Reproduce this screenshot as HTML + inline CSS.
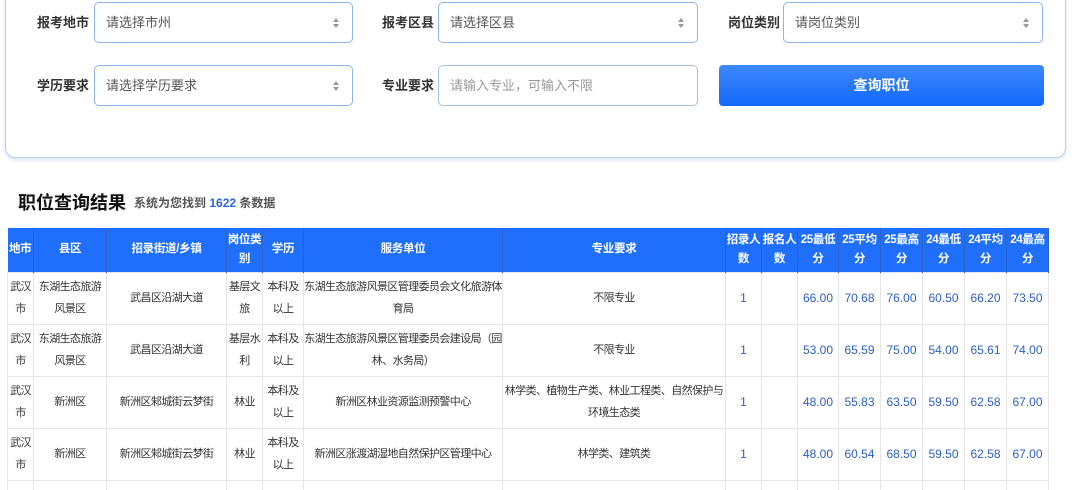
<!DOCTYPE html>
<html><head><meta charset="utf-8"><style>
*{box-sizing:border-box;margin:0;padding:0}
html,body{width:1080px;height:490px;overflow:hidden}
body{background:#fff;font-family:"Liberation Sans","Noto Sans CJK SC",sans-serif;color:#333;position:relative}
.card{position:absolute;left:5px;top:-20px;width:1061px;height:178px;border:1px solid #b7cff0;border-radius:10px;box-shadow:0 2px 4px rgba(80,130,200,.2)}
.lab{position:absolute;font-size:13px;font-weight:bold;color:#333;line-height:16px}
.inp{position:absolute;height:41px;border:1px solid #8fb4ea;border-radius:5px;font-size:13px;color:#555;padding-left:11px;line-height:39px}
.inp.ph{color:#999;border-color:#a9c2e6}
.arr{position:absolute;right:12px;top:14px;width:8px;height:12px}
.btn{position:absolute;left:719px;top:65px;width:325px;height:41px;border-radius:4px;background:linear-gradient(#3f88fb,#1168fb);color:#fff;font-weight:bold;font-size:14px;text-align:center;line-height:41px}
.title{position:absolute;left:18px;top:189px;font-size:18px;font-weight:bold;color:#111}
.sub{position:absolute;left:134px;top:194px;font-size:12px;color:#555;font-weight:bold}
.sub b{color:#2a66d9}
.wrap{position:absolute;left:0;top:0;width:1080px;height:490px;overflow:hidden}
table{position:absolute;left:7px;top:228px;border-collapse:collapse;table-layout:fixed;width:1041px}
th{background:#1f6ffc;color:#fff;font-size:11.5px;font-weight:bold;height:44px;line-height:19px;border-right:1px solid #2a63c8;padding:0;overflow:hidden;letter-spacing:-0.3px}
td{font-size:11px;letter-spacing:-0.6px;color:#333;height:52px;line-height:22px;text-align:center;border:1px solid #e3e6ea;padding:0;vertical-align:middle}
td.n{color:#2e5fc4;font-size:12px;letter-spacing:0}
</style></head><body>
<div class="card"></div>
<div class="lab" style="left:37px;top:15px">报考地市</div>
<div class="inp" style="left:94px;top:2px;width:259px">请选择市州<svg class="arr" viewBox="0 0 8 12"><path d="M1 5L4 1L7 5Z M1 7L4 11L7 7Z" fill="#999"/></svg></div>
<div class="lab" style="left:382px;top:15px">报考区县</div>
<div class="inp" style="left:438px;top:2px;width:260px">请选择区县<svg class="arr" viewBox="0 0 8 12"><path d="M1 5L4 1L7 5Z M1 7L4 11L7 7Z" fill="#999"/></svg></div>
<div class="lab" style="left:728px;top:15px">岗位类别</div>
<div class="inp" style="left:783px;top:2px;width:260px">请岗位类别<svg class="arr" viewBox="0 0 8 12"><path d="M1 5L4 1L7 5Z M1 7L4 11L7 7Z" fill="#999"/></svg></div>
<div class="lab" style="left:37px;top:78px">学历要求</div>
<div class="inp" style="left:94px;top:65px;width:259px">请选择学历要求<svg class="arr" viewBox="0 0 8 12"><path d="M1 5L4 1L7 5Z M1 7L4 11L7 7Z" fill="#999"/></svg></div>
<div class="lab" style="left:382px;top:78px">专业要求</div>
<div class="inp ph" style="left:438px;top:65px;width:260px">请输入专业，可输入不限</div>
<div class="btn">查询职位</div>
<div class="title">职位查询结果</div>
<div class="sub">系统为您找到 <b>1622</b> 条数据</div>
<div class="wrap">
<table>
<colgroup><col style="width:26px"><col style="width:73px"><col style="width:120px"><col style="width:36px"><col style="width:41px"><col style="width:199px"><col style="width:223px"><col style="width:36px"><col style="width:36px"><col style="width:41px"><col style="width:42px"><col style="width:42px"><col style="width:42px"><col style="width:42px"><col style="width:42px"></colgroup>
<tr><th>地市</th><th>县区</th><th>招录街道/乡镇</th><th>岗位类别</th><th>学历</th><th>服务单位</th><th>专业要求</th><th>招录人数</th><th>报名人数</th><th>25最低分</th><th>25平均分</th><th>25最高分</th><th>24最低分</th><th>24平均分</th><th>24最高分</th></tr>
<tr><td>武汉市</td><td>东湖生态旅游风景区</td><td>武昌区沿湖大道</td><td>基层文旅</td><td>本科及以上</td><td>东湖生态旅游风景区管理委员会文化旅游体育局</td><td>不限专业</td><td class="n">1</td><td></td><td class="n">66.00</td><td class="n">70.68</td><td class="n">76.00</td><td class="n">60.50</td><td class="n">66.20</td><td class="n">73.50</td></tr>
<tr><td>武汉市</td><td>东湖生态旅游风景区</td><td>武昌区沿湖大道</td><td>基层水利</td><td>本科及以上</td><td>东湖生态旅游风景区管理委员会建设局（园林、水务局）</td><td>不限专业</td><td class="n">1</td><td></td><td class="n">53.00</td><td class="n">65.59</td><td class="n">75.00</td><td class="n">54.00</td><td class="n">65.61</td><td class="n">74.00</td></tr>
<tr><td>武汉市</td><td>新洲区</td><td>新洲区邾城街云梦街</td><td>林业</td><td>本科及以上</td><td>新洲区林业资源监测预警中心</td><td>林学类、植物生产类、林业工程类、自然保护与环境生态类</td><td class="n">1</td><td></td><td class="n">48.00</td><td class="n">55.83</td><td class="n">63.50</td><td class="n">59.50</td><td class="n">62.58</td><td class="n">67.00</td></tr>
<tr><td>武汉市</td><td>新洲区</td><td>新洲区邾城街云梦街</td><td>林业</td><td>本科及以上</td><td>新洲区涨渡湖湿地自然保护区管理中心</td><td>林学类、建筑类</td><td class="n">1</td><td></td><td class="n">48.00</td><td class="n">60.54</td><td class="n">68.50</td><td class="n">59.50</td><td class="n">62.58</td><td class="n">67.00</td></tr>
<tr><td>&nbsp;</td><td></td><td></td><td></td><td></td><td></td><td></td><td></td><td></td><td></td><td></td><td></td><td></td><td></td><td></td></tr>
</table>
</div>
</body></html>
